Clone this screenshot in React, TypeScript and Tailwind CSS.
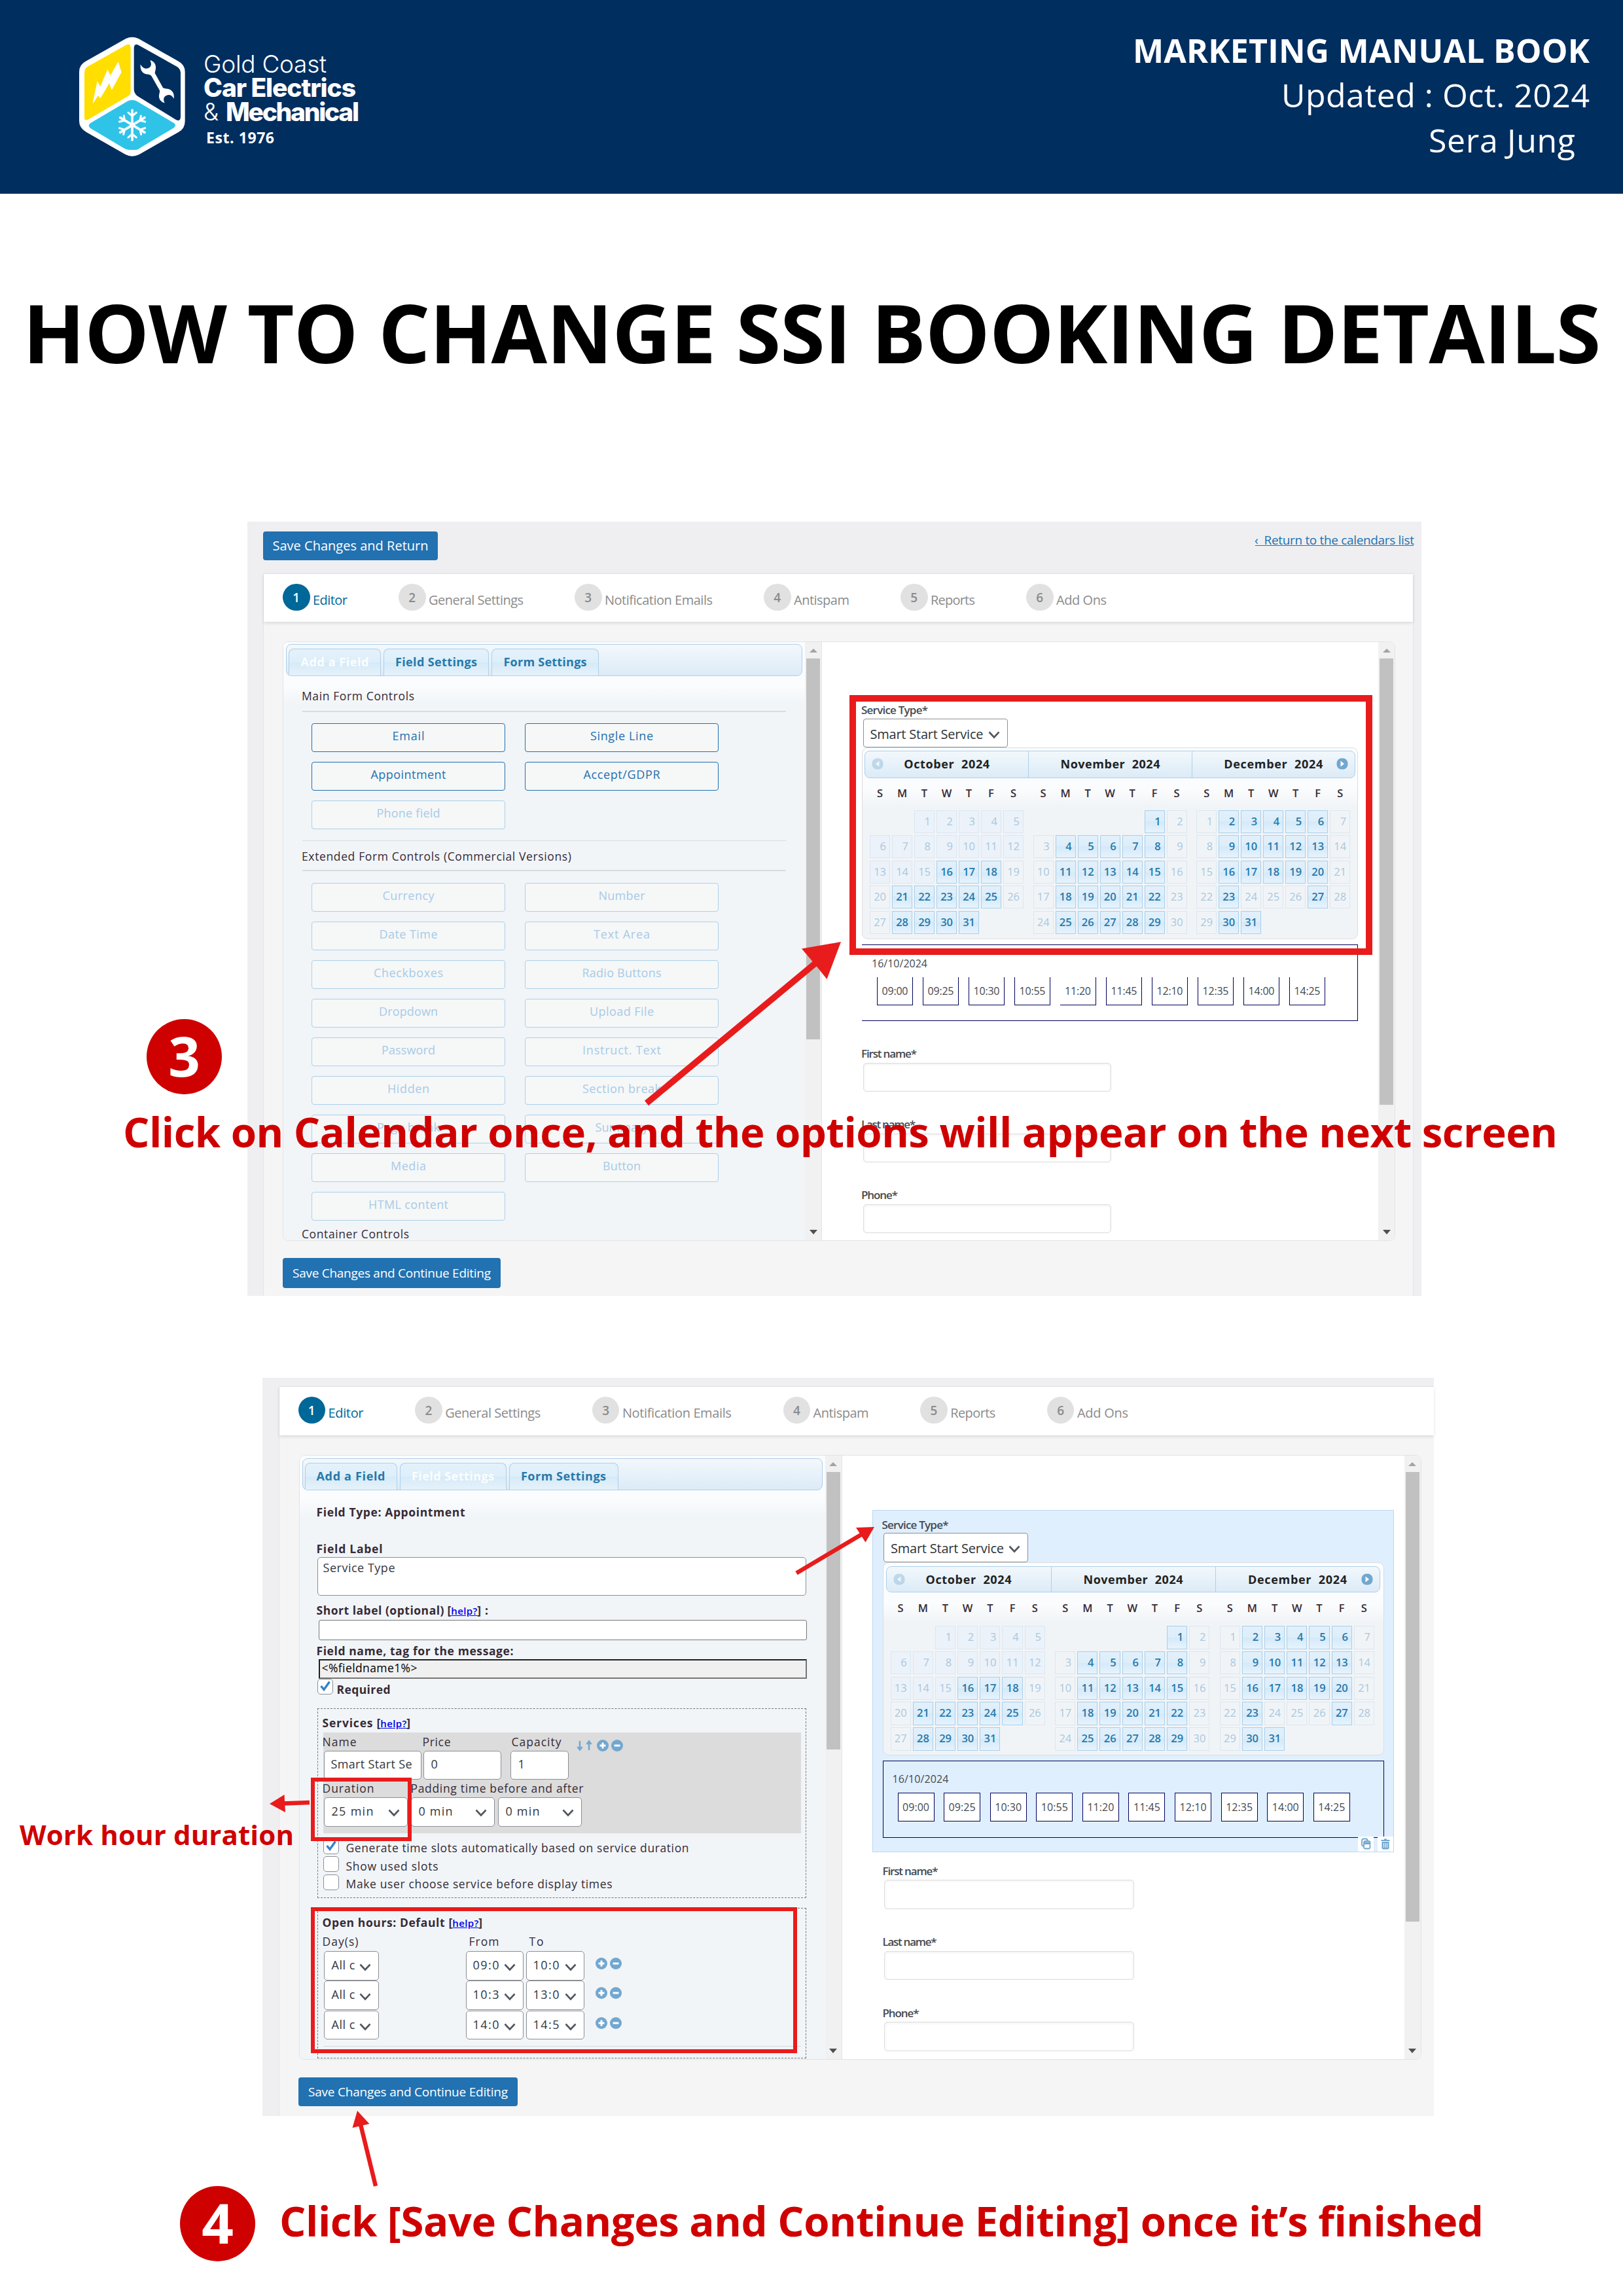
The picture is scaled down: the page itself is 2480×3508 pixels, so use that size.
import { useLayoutEffect, useRef, useState } from "react";
import type { ReactNode } from "react";

/* Single line of text that is tracked out (or in) to fill a given width. */
function Fit({ w, className = "", children }: { w: number; className?: string; children: string }) {
  const ref = useRef<HTMLSpanElement>(null);
  const [spacing, setSpacing] = useState(0);
  useLayoutEffect(() => {
    if (!ref.current) return;
    const natural = ref.current.getBoundingClientRect().width;
    setSpacing((w + 2 - natural) / Math.max(1, children.length - 1));
  }, [w, children]);
  return (
    <span className={`inline-block whitespace-nowrap ${className}`} style={{ width: w }}>
      <span ref={ref} className="-ml-px inline-block" style={{ letterSpacing: spacing }}>
        {children}
      </span>
    </span>
  );
}

function Logo() {
  return (
    <div className="flex">
      <svg width="164" height="184" viewBox="60 78 492 552">
        <path
          d="M277 87Q306 74 335 87L516 190Q548 206 548 240V465Q548 500 519 515L338 618Q306 634 275 618L95 515Q63 497 63 465V240Q63 206 95 190Z"
          fill="#fff"
        />
        <path d="M100 216L281 115Q298 108 299 130V330Q299 342 290 349L106 457Q87 467 87 450V243Q88 225 100 216Z" fill="#ffde00" />
        <path d="M512 216L331 115Q315 110 314 130V320Q315 338 330 350L508 460Q527 467 528 446V243Q526 225 512 216Z" fill="#002e5f" />
        <path d="M284 374Q306 363 328 374L497 474Q511 484 497 496L342 588Q334 597 320 597H294Q278 597 266 588L115 498Q99 486 115 474Z" fill="#30c3e8" />
        <path d="M242 193L257 241L212 323L201 292L160 361L150 348L124 388L146 281L160 306L193 228L206 256Z" fill="#fff" />
        <path
          d="M388 186C404 190 415 203 414 220C414 230 411 237 410 245L447 312C455 318 466 316 475 319C491 325 500 340 497 362C488 346 476 342 464 347C451 352 446 364 455 382C438 378 427 364 429 347C430 339 433 332 432 325L394 258C388 250 376 252 367 249C350 243 342 226 344 205C352 220 364 228 379 223C393 217 397 205 388 186Z"
          fill="#fff"
        />
        <g stroke="#fff" strokeWidth="11" strokeLinecap="round" fill="none">
          <path d="M306 415V552M251 449L363 517M363 449L251 517" />
          <path d="M288 426L306 442L325 426M288 540L306 524L325 540" strokeWidth="9" />
          <path d="M247 468L271 462L268 441M365 468L342 462L346 441M247 497L271 505L266 526M365 497L342 505L347 526" strokeWidth="9" />
        </g>
      </svg>
      <div className="ml-[28px] flex flex-col font-[Inter] text-white">
        <Fit w={186} className="mt-[23px] h-[36px] text-[37px] leading-[37px] font-light">Gold Coast</Fit>
        <Fit w={231} className="h-[37px] text-[39px] leading-[37px] font-extrabold">Car Electrics</Fit>
        <div className="flex h-[37px] text-[37px] leading-[37px]">
          <Fit w={22} className="mr-[12px] font-light">&</Fit>
          <Fit w={202} className="text-[39px] font-extrabold">Mechanical</Fit>
        </div>
        <Fit w={102} className="mt-[7px] ml-[4px] font-['Open_Sans'] text-[23px] leading-[28px] font-bold">Est. 1976</Fit>
      </div>
    </div>
  );
}

function Chevron({ className = "" }: { className?: string }) {
  return (
    <svg className={className} width="18" height="12" viewBox="0 0 18 12" fill="none" stroke="#50575e" strokeWidth="2.6">
      <path d="M1.5 1.5L9 9.5L16.5 1.5" />
    </svg>
  );
}

function Step({ n, label, w }: { n: number; label: string; w: number }) {
  const active = n === 1;
  return (
    <div className="flex">
      <div
        className={`mt-[14.5px] size-[41.5px] rounded-full text-center text-[19px] leading-[42px] font-semibold ${
          active ? "bg-[#006799] text-white" : "bg-[#e1e1e1] text-[#8b8b8b]"
        }`}
      >
        {n}
      </div>
      <Fit
        w={w}
        className={`mt-[28px] ml-[5.5px] text-[20px] leading-[24px] font-medium ${active ? "text-[#006799]" : "text-[#8b8b8b]"}`}
      >
        {label}
      </Fit>
    </div>
  );
}

const STEPS = ["Editor", "General Settings", "Notification Emails", "Antispam", "Reports", "Add Ons"];

function Stepper({ widths, className }: { widths: number[]; className: string }) {
  return (
    <div className={`relative flex bg-white pl-[29px] shadow-[0_2px_5px_rgba(0,0,0,0.12)] ${className}`}>
      {STEPS.map((s, i) => (
        <Step key={s} n={i + 1} label={s} w={widths[i]} />
      ))}
    </div>
  );
}

function Scrollbar({ thumb }: { thumb: string }) {
  return (
    <div className="flex w-[25px] shrink-0 flex-col items-center bg-[#f1f1f1]">
      <svg className="mt-[10px] mb-[9px] shrink-0" width="12" height="6" viewBox="0 0 12 6">
        <path d="M6 0L12 6H0Z" fill="#a3a3a3" />
      </svg>
      <div className={`w-[21px] shrink-0 bg-[#c1c1c1] ${thumb}`} />
      <svg className="mt-auto mb-[9px] shrink-0" width="12" height="7" viewBox="0 0 12 7">
        <path d="M6 7L12 0H0Z" fill="#505050" />
      </svg>
    </div>
  );
}

interface Tab {
  label: string;
  text: number;
  className: string;
}

function TabBar({ tabs, active, className }: { tabs: Tab[]; active: number; className: string }) {
  return (
    <div
      className={`flex shrink-0 items-end gap-[4px] rounded-[8px] border-[1.5px] border-[#aed0ea] bg-linear-to-b from-[#f3f8fc] to-[#dcebf7] pl-[3px] ${className}`}
    >
      {tabs.map((t, i) => (
        <div
          key={t.label}
          className={`h-[41px] rounded-t-[8px] border border-b-0 border-[#aed0ea] bg-[linear-gradient(#e4f1fb_0%,#deeffa_50%,#d5eaf8_50%,#e6f2fb_100%)] pt-[7px] text-center text-[18px] leading-[24px] font-bold ${
            active === i ? "text-[#fbfdfe]" : "text-[#2779aa]"
          } ${t.className}`}
        >
          <Fit w={t.text}>{t.label}</Fit>
        </div>
      ))}
    </div>
  );
}

function ControlButton({ label, w, enabled }: { label: string; w: number; enabled: boolean }) {
  return (
    <div
      className={`h-[44px] rounded-[4px] border bg-[#f6f7f7] text-center text-[18px] leading-[37px] ${
        enabled ? "border-[#2271b1] text-[#2271b1]" : "border-[#acd0ea] text-[#a6cbe8]"
      }`}
    >
      <Fit w={w}>{label}</Fit>
    </div>
  );
}

const MAIN_CONTROLS: [string, number][] = [
  ["Email", 47],
  ["Single Line", 94],
  ["Appointment", 113],
  ["Accept/GDPR", 115],
  ["Phone field", 95],
];

const EXTENDED_CONTROLS: [string, number][] = [
  ["Currency", 77],
  ["Number", 69],
  ["Date Time", 87],
  ["Text Area", 84],
  ["Checkboxes", 104],
  ["Radio Buttons", 119],
  ["Dropdown", 88],
  ["Upload File", 96],
  ["Password", 80],
  ["Instruct. Text", 118],
  ["Hidden", 62],
  ["Section break", 118],
  ["Page break", 94],
  ["Summary", 79],
  ["Media", 52],
  ["Button", 56],
  ["HTML content", 120],
];

const MONTHS = [
  { name: "October", start: 2, days: 31, past: 15, closed: [] as number[], text: 129 },
  { name: "November", start: 5, days: 30, past: 0, closed: [] as number[], text: 150 },
  { name: "December", start: 0, days: 31, past: 0, closed: [24, 25, 26], text: 149 },
];

function MonthGrid({ month, cells }: { month: (typeof MONTHS)[number]; cells: string }) {
  const blanks = Array.from({ length: month.start }, (_, i) => <span key={`b${i}`} />);
  const days = Array.from({ length: month.days }, (_, i) => {
    const day = i + 1;
    const weekday = (month.start + i) % 7;
    const off = weekday === 0 || weekday === 6 || month.closed.includes(day);
    const tone =
      day <= month.past
        ? "border-[#dae7f2] bg-[#ecf2f9] text-[#a8c8df]"
        : off
          ? "border-[#dae7f1] text-[#a8c8df]"
          : "border-[#a9cfea] bg-[linear-gradient(#e2f0fb_0%,#dceefa_50%,#d4e9f9_50%,#e6f3fd_100%)] text-[#2779aa] font-semibold";
    return (
      <span key={day} className={`border pr-[5px] text-right text-[16.5px] leading-[31px] ${tone}`}>
        {day}
      </span>
    );
  });
  return (
    <div className={`grid ${cells}`}>
      {blanks}
      {days}
    </div>
  );
}

function PageArrow({ flip = false }: { flip?: boolean }) {
  return (
    <svg className={flip ? "rotate-180 opacity-35" : ""} width="18" height="18" viewBox="0 0 18 18">
      <rect x="0.5" y="0.5" width="17" height="17" rx="7.5" fill="#72a7cf" />
      <path d="M6.5 4.5L12 9L6.5 13.5Z" fill="#fff" />
    </svg>
  );
}

interface CalendarSize {
  box: string;
  header: string;
  month: string;
  week: string;
  cells: string;
}

function Calendar({ size }: { size: CalendarSize }) {
  return (
    <div className={`shrink-0 rounded-[9px] border border-[#dddddd] bg-[linear-gradient(#fbfcfd_0,#fbfcfd_62px,#f1f4f7_90px)] ${size.box}`}>
      <div
        className={`relative flex rounded-[8px] border-[1.5px] border-[#aed0ea] bg-linear-to-b from-[#f2f8fc] to-[#dcebf7] text-[18px] font-bold text-[#222222] ${size.header}`}
      >
        {MONTHS.map((m) => (
          <div key={m.name} className={`border-l border-[#aed0ea] text-center whitespace-pre first:border-l-0 ${size.month}`}>
            <Fit w={m.text} className="whitespace-pre">{`${m.name}  2024`}</Fit>
          </div>
        ))}
        <div className="absolute top-[10px] left-[10px]">
          <PageArrow flip />
        </div>
        <div className="absolute top-[10px] right-[10px]">
          <PageArrow />
        </div>
      </div>
      <div className="ml-[4px] flex">
        {MONTHS.map((m) => (
          <div key={m.name} className={`pl-[7px] ${size.month}`}>
            <div className={`grid h-[24px] text-center text-[16.5px] leading-[24px] font-semibold text-[#362b36] ${size.week}`}>
              {["S", "M", "T", "W", "T", "F", "S"].map((d, i) => (
                <span key={i}>{d}</span>
              ))}
            </div>
            <MonthGrid month={m} cells={size.cells} />
          </div>
        ))}
      </div>
    </div>
  );
}

const TIMES = ["09:00", "09:25", "10:30", "10:55", "11:20", "11:45", "12:10", "12:35", "14:00", "14:25"];

function ServiceSelect() {
  return (
    <div className="mt-[0.5px] ml-[1.5px] flex h-[44.5px] w-[221px] shrink-0 items-start rounded-[4px] border-[1.5px] border-[#8c8f94] bg-white pl-[11px] text-[20px] leading-[45px] text-[#2c3338]">
      <Fit w={171}>Smart Start Service</Fit>
      <Chevron className="mt-[18px] ml-[8px]" />
    </div>
  );
}

function PersonField({ label, w, input }: { label: string; w: number; input: string }) {
  return (
    <div className="flex flex-col">
      <Fit w={w} className="h-[24px] text-[17px] leading-[24px] font-semibold text-[#444a50]">{label}</Fit>
      <div className={`mt-[1.5px] ml-[1.5px] h-[44.5px] rounded-[5px] border border-[#dddddd] bg-white shadow-[inset_0_1px_4px_rgba(0,0,0,0.07)] ${input}`} />
    </div>
  );
}

function PersonFields({ input, className }: { input: string; className: string }) {
  return (
    <div className={`flex flex-col ${className}`}>
      <PersonField label="First name*" w={83} input={input} />
      <PersonField label="Last name*" w={81} input={input} />
      <PersonField label="Phone*" w={54} input={input} />
    </div>
  );
}

function SaveButton({ label, w, className }: { label: string; w: number; className: string }) {
  return (
    <div className={`shrink-0 rounded-[4px] bg-[#2271b1] text-center text-white ${className}`}>
      <Fit w={w}>{label}</Fit>
    </div>
  );
}

function AddFieldScreen() {
  return (
    <section className="mt-[228px] ml-[378px] flex h-[1183px] w-[1794px] flex-col bg-[#efeff1]">
      <div className="flex h-[79px] shrink-0 justify-between pr-[12px] pl-[24px]">
        <SaveButton label="Save Changes and Return" w={236} className="mt-[15px] h-[44px] w-[267px] text-[20px] leading-[43px]" />
        <Fit w={242} className="mt-[16px] h-[21px] border-b-[1.5px] border-[#2271b1] text-[19px] leading-[24px] whitespace-pre text-[#2271b1]">
          {"‹  Return to the calendars list"}
        </Fit>
      </div>
      <div className="mr-[12px] ml-[24px] flex h-[1104px] flex-col border-x border-t border-[#e4e4e6] bg-[#f5f5f5]">
        <Stepper widths={[51, 143, 163, 83, 66, 75]} className="h-[73px] shrink-0 gap-[79px]" />
        <div className="mt-[30px] ml-[29px] flex h-[916px] w-[1700px] shrink-0 overflow-hidden rounded-[9px] border border-[#e3e3e3] bg-white">
          <div className="flex w-[797px] shrink-0 flex-col overflow-hidden bg-[linear-gradient(#fbfcfe_0,#fbfcfe_66px,#f1f5f8_95px)]">
            <TabBar
              active={0}
              className="mt-[3px] ml-[4px] h-[49px] w-[789px]"
              tabs={[
                { label: "Add a Field", text: 102, className: "w-[141px]" },
                { label: "Field Settings", text: 123, className: "w-[161px]" },
                { label: "Form Settings", text: 125, className: "w-[164px]" },
              ]}
            />
            <div className="ml-[29px] flex flex-col text-[17.5px] text-[#362b36]">
              <Fit w={170} className="mt-[18px] h-[24px] leading-[24px]">Main Form Controls</Fit>
              <div className="mt-[11px] h-[1.5px] w-[739px] bg-[#d9dbdd]" />
              <div className="mt-[17px] ml-[14px] grid grid-cols-[296px_296px] gap-x-[30px] gap-y-[15px]">
                {MAIN_CONTROLS.map(([l, w]) => (
                  <ControlButton key={l} label={l} w={w} enabled={l !== "Phone field"} />
                ))}
              </div>
              <div className="mt-[17px] h-[1.5px] w-[739px] bg-[#d9dbdd]" />
              <Fit w={410} className="mt-[11px] h-[24px] leading-[24px]">Extended Form Controls (Commercial Versions)</Fit>
              <div className="mt-[9px] h-[1.5px] w-[739px] bg-[#d9dbdd]" />
              <div className="mt-[18px] ml-[14px] grid grid-cols-[296px_296px] gap-x-[30px] gap-y-[15px]">
                {EXTENDED_CONTROLS.map(([l, w]) => (
                  <ControlButton key={l} label={l} w={w} enabled={false} />
                ))}
              </div>
              <Fit w={162} className="mt-[8px] h-[24px] leading-[24px]">Container Controls</Fit>
            </div>
          </div>
          <Scrollbar thumb="h-[582px]" />
          <div className="flex w-[851px] shrink-0 flex-col border-l border-[#e5e5e5] pl-[61px]">
            <Fit w={100} className="mt-[92px] h-[24px] text-[17px] leading-[24px] font-semibold text-[#444a50]">Service Type*</Fit>
            <ServiceSelect />
            <Calendar
              size={{
                box: "h-[293px] w-[758px]",
                header: "mt-[4px] ml-[3px] h-[41.5px] w-[750px] leading-[38px]",
                month: "w-[249.6px]",
                week: "mt-[11px] grid-cols-[repeat(7,31px)] gap-x-[3px]",
                cells: "mt-[14.5px] grid-cols-[repeat(7,31px)] auto-rows-[35px] gap-x-[3px] gap-y-[3.4px]",
              }}
            />
            <div className="mt-[8px] flex h-[117px] w-[758px] shrink-0 flex-col border-y-[1.5px] border-r-[1.5px] border-[#00005a] pt-[16px] pl-[16px] text-[16px] text-[#444a50]">
              <Fit w={83} className="h-[24px] leading-[24px]">16/10/2024</Fit>
              <div className="mt-[9px] ml-[7px] flex gap-[15px]">
                {TIMES.map((t) => (
                  <div
                    key={t}
                    className={`h-[42.5px] w-[55px] border-r-[1.5px] border-b-[1.5px] border-[#00005a] text-center leading-[43px] ${t === "11:20" ? "" : "border-l-[1.5px]"}`}
                  >
                    <Fit w={38}>{t}</Fit>
                  </div>
                ))}
              </div>
            </div>
            <PersonFields className="mt-[38px] gap-[38px]" input="w-[379px]" />
          </div>
          <Scrollbar thumb="h-[682px]" />
        </div>
        <SaveButton label="Save Changes and Continue Editing" w={301} className="mt-[26px] ml-[29px] h-[45.5px] w-[333px] text-[19px] leading-[47px]" />
      </div>
    </section>
  );
}

function PlusMinus() {
  return (
    <div className="flex gap-[4px]">
      {["M9 4.5V13.5M4.5 9H13.5", "M4.5 9H13.5"].map((d) => (
        <svg key={d} width="18" height="18" viewBox="0 0 18 18">
          <circle cx="9" cy="9" r="9" fill="#72a7cf" />
          <path d={d} stroke="#fff" strokeWidth="3" />
        </svg>
      ))}
    </div>
  );
}

function Help() {
  return (
    <span className="flex">
      [<Fit w={38} className="mx-px pt-px text-[15px] font-semibold text-[#0000ee] [&>span]:underline">help?</Fit>]
    </span>
  );
}

function Check({ on = false }: { on?: boolean }) {
  return (
    <div className="flex size-[24px] shrink-0 items-center justify-center rounded-[5px] border-[1.5px] border-[#8c8f94] bg-white">
      {on && (
        <svg width="20" height="20" viewBox="0 0 20 20" fill="none" stroke="#3582c4" strokeWidth="3.4">
          <path d="M3.5 9L8 14.5L16.5 2.5" />
        </svg>
      )}
    </div>
  );
}

function Box({ className, children }: { className: string; children?: ReactNode }) {
  return (
    <div className={`flex shrink-0 rounded-[5px] border-[1.5px] border-[#8c8f94] bg-white text-[18px] text-[#32373c] ${className}`}>
      {children}
    </div>
  );
}

const HOURS = [
  ["09:0", "10:0"],
  ["10:3", "13:0"],
  ["14:0", "14:5"],
];

function FieldSettings() {
  return (
    <div className="ml-[27px] flex flex-col text-[17.5px] leading-[24px] text-[#362b36]">
      <Fit w={225} className="mt-[21px] h-[24px] font-bold">Field Type: Appointment</Fit>
      <Fit w={99} className="mt-[31.5px] h-[24px] font-bold">Field Label</Fit>
      <Box className="mt-[1.5px] h-[59px] w-[747px] pt-[3px] pl-[9px]">
        <Fit w={108}>Service Type</Fit>
      </Box>
      <div className="mt-[9.5px] flex h-[24px] font-bold">
        <Fit w={193} className="mr-[6px]">Short label (optional)</Fit>
        <Help />
        <span className="ml-[6px]">:</span>
      </div>
      <div className="mt-[3.5px] ml-[2px] h-[31px] w-[746px] rounded-[3px] border border-[#76797d] bg-white" />
      <Fit w={299} className="mt-[3.5px] h-[24px] font-bold">Field name, tag for the message:</Fit>
      <div className="mt-[1.5px] ml-[2px] h-[30px] w-[746px] border-[2.5px] border-t-[#1c2022] border-r-[#767676] border-b-[#767676] border-l-[#1c2022] bg-[#f0f0f0] pl-[4px] leading-[23px] text-black">
        <Fit w={144}>{"<%fieldname1%>"}</Fit>
      </div>
      <div className="flex h-[24px]">
        <Check on />
        <Fit w={80} className="mt-[4px] ml-[7px] font-bold">Required</Fit>
      </div>

      <div className="mt-[20.5px] h-[290px] w-[747px] border border-dashed border-[#777777] pt-[9px] pl-[8px]">
        <div className="flex h-[24px] gap-[7px] font-bold">
          <Fit w={75}>Services</Fit>
          <Help />
        </div>
        <div className="mt-[3px] h-[154px] w-[730px] bg-[#dcdcdc] pt-[2px]">
          <div className="flex h-[26.5px]">
            <div className="w-[153px]"><Fit w={50}>Name</Fit></div>
            <div className="w-[136px]"><Fit w={41}>Price</Fit></div>
            <div className="w-[98px]"><Fit w={74}>Capacity</Fit></div>
            <div className="mt-[9px] flex">
              <svg className="mr-[7px]" width="24" height="18" viewBox="0 0 24 18" fill="none" stroke="#72a7cf" strokeWidth="2.5">
                <path d="M5 2V15M1.5 11L5 15.5L8.5 11M19 16V3M15.500 7L19 2.500L22.500 7" />
              </svg>
              <PlusMinus />
            </div>
          </div>
          <div className="flex pl-px leading-[39px]">
            <Box className="h-[44px] w-[149px] pl-[11px]"><Fit w={122}>Smart Start Se</Fit></Box>
            <Box className="ml-[3px] h-[44px] w-[119px] pl-[11px]">0</Box>
            <Box className="ml-[14px] h-[44px] w-[89px] pl-[11px]">1</Box>
          </div>
          <div className="mt-[1px] flex h-[24px]">
            <div className="w-[135px]"><Fit w={77}>Duration</Fit></div>
            <Fit w={262}>Padding time before and after</Fit>
          </div>
          <div className="mt-[2px] flex gap-[4.5px] pl-px leading-[41px]">
            {[
              ["25 min", 62],
              ["0 min", 50],
              ["0 min ", 50],
            ].map(([t, w]) => (
              <Box key={t} className="h-[44.5px] w-[128.5px] justify-between pr-[11px] pl-[12px]">
                <Fit w={w as number}>{(t as string).trim()}</Fit>
                <Chevron className="mt-[17px]" />
              </Box>
            ))}
          </div>
        </div>
        <div className="mt-[8px] flex flex-col gap-[3.7px]">
          {[
            { t: "Generate time slots automatically based on service duration", w: 522, on: true },
            { t: "Show used slots", w: 139, on: false },
            { t: "Make user choose service before display times", w: 405, on: false },
          ].map((r) => (
            <div key={r.t} className="flex h-[24px]">
              <Check on={r.on} />
              <Fit w={r.w} className="mt-[2.5px] ml-[12px]">{r.t}</Fit>
            </div>
          ))}
        </div>
      </div>

      <div className="mt-[15.5px] h-[230px] w-[747px] border border-dashed border-[#777777] pt-[9px] pl-[8px]">
        <div className="flex h-[24px] gap-[7px] font-bold">
          <Fit w={185}>Open hours: Default</Fit>
          <Help />
        </div>
        <div className="mt-[4.5px] flex h-[27.5px]">
          <div className="w-[224px]"><Fit w={53}>Day(s)</Fit></div>
          <div className="w-[92px]"><Fit w={44}>From</Fit></div>
          <Fit w={20}>To</Fit>
        </div>
        {HOURS.map(([from, to]) => (
          <div key={from} className="flex h-[45.3px] pl-px leading-[41px]">
            <Box className="h-[44.5px] w-[84px] justify-between pr-[11px] pl-[12px]">
              <Fit w={34}>All c</Fit>
              <Chevron className="mt-[18px]" />
            </Box>
            <Box className="ml-[133px] h-[44.5px] w-[88px] justify-between pr-[11px] pl-[11px]">
              <Fit w={38}>{from}</Fit>
              <Chevron className="mt-[18px]" />
            </Box>
            <Box className="ml-[4px] h-[44.5px] w-[89px] justify-between pr-[11px] pl-[11px]">
              <Fit w={38}>{to}</Fit>
              <Chevron className="mt-[18px]" />
            </Box>
            <div className="mt-[10px] ml-[17px]">
              <PlusMinus />
            </div>
          </div>
        ))}
        <div className="mt-[9px] h-px w-[730px] bg-[#d5d8da]" />
      </div>
    </div>
  );
}

function FieldSettingsScreen() {
  return (
    <section className="mt-[125px] ml-[401px] flex h-[1128px] w-[1790px] flex-col bg-[#efeff1] pt-[13px] pl-[24.500px]">
      <div className="flex h-[1115px] flex-col border-t border-l border-[#e4e4e6] bg-[#f5f5f5]">
        <Stepper widths={[52, 144, 165, 83, 67, 76]} className="h-[74px] shrink-0 gap-[79.700px]" />
        <div className="mt-[30px] ml-[30px] flex h-[924px] w-[1715px] shrink-0 overflow-hidden rounded-[9px] border border-[#e3e3e3] bg-white">
          <div className="flex w-[803px] shrink-0 flex-col overflow-hidden bg-[linear-gradient(#fbfcfe_0,#fbfcfe_66px,#f1f5f8_95px)]">
            <TabBar
              active={1}
              className="mt-[4px] ml-[4px] h-[49px] w-[795px]"
              tabs={[
                { label: "Add a Field", text: 103, className: "w-[141px]" },
                { label: "Field Settings", text: 124, className: "w-[163px]" },
                { label: "Form Settings", text: 128, className: "w-[167px]" },
              ]}
            />
            <FieldSettings />
          </div>
          <Scrollbar thumb="h-[424px]" />
          <div className="flex w-[860px] shrink-0 flex-col border-l border-[#e5e5e5]">
            <div className="relative mt-[83px] ml-[46px] flex h-[522.5px] w-[797px] shrink-0 flex-col border border-[#bcd9f0] bg-[#dfeffe] pt-[9.5px] pl-[15px]">
              <Fit w={100} className="h-[24px] text-[17px] leading-[24px] font-semibold text-[#444a50]">Service Type*</Fit>
              <ServiceSelect />
              <Calendar
                size={{
                  box: "h-[295.5px] w-[766px]",
                  header: "mt-[5px] ml-[4px] h-[40.5px] w-[755px] leading-[38px]",
                  month: "w-[251.6px]",
                  week: "mt-[12px] grid-cols-[repeat(7,31.2px)] gap-x-[3px]",
                  cells: "mt-[15px] grid-cols-[repeat(7,31.2px)] auto-rows-[35.5px] gap-x-[3px] gap-y-[3.3px]",
                }}
              />
              <div className="mt-[7.5px] flex h-[118.5px] w-[766px] shrink-0 flex-col border-[1.5px] border-[#00005a] pt-[15px] pl-[15px] text-[16px] text-[#444a50]">
                <Fit w={84} className="h-[24px] leading-[25px]">16/10/2024</Fit>
                <div className="mt-[9.5px] ml-[7px] flex gap-[14.6px]">
                  {TIMES.map((t) => (
                    <div key={t} className="h-[44px] w-[56px] border-[1.5px] border-[#00005a] bg-white text-center leading-[42.500px]">
                      <Fit w={39}>{t}</Fit>
                    </div>
                  ))}
                </div>
              </div>
              <div className="absolute right-0 bottom-0 flex gap-[6px]">
                <div className="flex h-[23px] w-[24px] items-center justify-center bg-white">
                  <svg width="16" height="18" viewBox="0 0 16 18">
                    <rect x="2" y="1.500" width="8.500" height="11" rx="2.500" fill="none" stroke="#72a7cf" strokeWidth="1.800" />
                    <rect x="5" y="5" width="9.500" height="11.500" rx="2.500" fill="#fff" stroke="#72a7cf" strokeWidth="1.800" />
                    <path d="M5.500 6.500H14V10H5.500Z" fill="#72a7cf" />
                  </svg>
                </div>
                <div className="flex h-[23px] w-[24px] items-center justify-center bg-white">
                  <svg width="14" height="17" viewBox="0 0 14 17" fill="#72a7cf">
                    <path d="M0.500 2H5V0.500H9V2H13.500V4H0.500Z" />
                    <path d="M1.500 5H12.500V14Q12.500 16.500 10 16.500H4Q1.500 16.500 1.500 14Z" />
                    <path d="M4.500 7V14M7 7V14M9.500 7V14" stroke="#fff" strokeWidth="1" />
                  </svg>
                </div>
              </div>
            </div>
            <PersonFields className="mt-[17px] ml-[63px] gap-[38.500px]" input="w-[382px]" />
          </div>
          <Scrollbar thumb="h-[687px]" />
        </div>
        <SaveButton label="Save Changes and Continue Editing" w={303} className="mt-[27px] ml-[29.500px] h-[44px] w-[335px] text-[19px] leading-[45.500px]" />
      </div>
    </section>
  );
}

function Badge({ n, className }: { n: number; className: string }) {
  return (
    <div className={`absolute size-[115px] rounded-full bg-[#cf0000] text-center text-[85px] leading-[110px] font-bold text-white ${className}`}>
      {n}
    </div>
  );
}

/* Red call-outs that sit on top of the two screens. */
function Annotations() {
  return (
    <>
      <div className="absolute top-[1062px] left-[1298px] h-[397px] w-[799px] border-[10px] border-[#e81c1c]" />
      <div className="absolute top-[2716px] left-[475px] h-[97px] w-[154px] border-[6px] border-[#e81c1c]" />
      <div className="absolute top-[2914px] left-[475px] h-[223px] w-[743px] border-[6px] border-[#e81c1c]" />
      <svg className="absolute top-0 left-0" width="2480" height="3508" viewBox="0 0 2480 3508" fill="#e81c1c" stroke="#e81c1c">
        <path d="M988 1685.500L1248 1470" strokeWidth="9.500" />
        <path d="M1285 1439L1263.500 1496L1245 1473L1225 1449.500Z" stroke="none" />
        <path d="M1217 2403.500L1318 2343.500" strokeWidth="6.500" />
        <path d="M1336 2333L1322.500 2356.500L1308 2334Z" stroke="none" />
        <path d="M473 2754L432 2755.500" strokeWidth="6.500" />
        <path d="M412 2756L434.500 2742L436 2769Z" stroke="none" />
        <path d="M574 3340L551 3246" strokeWidth="6.500" />
        <path d="M546 3225L564.500 3245L538.500 3251Z" stroke="none" />
      </svg>
      <Badge n={3} className="top-[1557px] left-[224px]" />
      <Badge n={4} className="top-[3340px] left-[275px]" />
      <div className="font-bold text-[#cf0000]">
        <Fit w={2190} className="absolute top-[1697px] left-[189px] text-[63.5px] leading-[64px]">
          Click on Calendar once, and the options will appear on the next screen
        </Fit>
        <Fit w={417} className="absolute top-[2782px] left-[31px] text-[42px] leading-[42px]">Work hour duration</Fit>
        <Fit w={1838} className="absolute top-[3361px] left-[428px] text-[63.5px] leading-[64px]">
          Click [Save Changes and Continue Editing] once it’s finished
        </Fit>
      </div>
    </>
  );
}

export default function App() {
  return (
    <main className="relative flex h-[3508px] w-[2480px] flex-col overflow-hidden bg-white font-['Open_Sans','Noto_Sans',sans-serif]">
      <header className="flex h-[296px] shrink-0 justify-between bg-[#002e5f] pr-[52px] pl-[120px] text-[50px] text-white">
        <div className="mt-[56px]">
          <Logo />
        </div>
        <div className="flex flex-col items-end pt-[44px]">
          <Fit w={696} className="leading-[66px] font-bold">MARKETING MANUAL BOOK</Fit>
          <Fit w={469} className="leading-[70px]">Updated : Oct. 2024</Fit>
          <Fit w={222} className="mr-[22px] leading-[69px]">Sera Jung</Fit>
        </div>
      </header>
      <h1 className="mt-[149px] ml-[36px] h-[124px] shrink-0 text-[124px] leading-[124px] font-bold text-black">
        <Fit w={2409}>HOW TO CHANGE SSI BOOKING DETAILS</Fit>
      </h1>
      <AddFieldScreen />
      <FieldSettingsScreen />
      <Annotations />
    </main>
  );
}
